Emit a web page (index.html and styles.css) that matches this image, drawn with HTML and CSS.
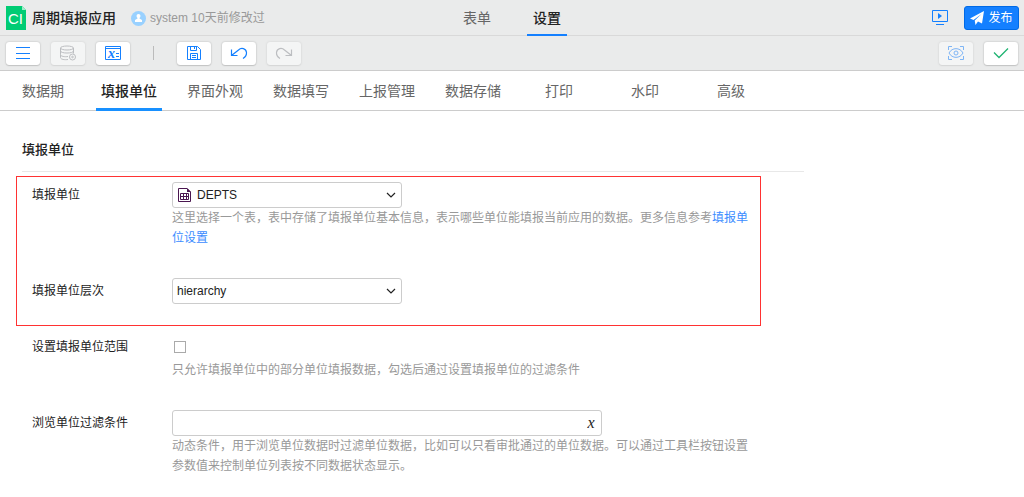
FILE: index.html
```html
<!DOCTYPE html>
<html lang="zh-CN">
<head>
<meta charset="utf-8">
<title>周期填报应用</title>
<link rel="stylesheet" href="styles.css">
</head>
<body>
<header class="header">
  <div class="brand">
    <svg class="logo" width="20" height="24" viewBox="0 0 20 24" aria-hidden="true">
      <path d="M0 0H16L20 4V24H0Z" fill="#00cc74"/>
      <path d="M16 0L20 4H16Z" fill="#a3edcb"/>
      <text x="2" y="18" class="logo-text">CI</text>
    </svg>
    <h1 class="app-name">周期填报应用</h1>
    <svg class="avatar" width="15" height="15" viewBox="0 0 15 15" aria-hidden="true">
      <circle cx="7.500" cy="7.500" r="7.500" fill="#99d1ff"/>
      <circle cx="7.500" cy="5" r="2" fill="#fff"/>
      <path d="M6.500 6H8.500V7.500L11 9V11H4V9L6.500 7.500Z" fill="#fff"/>
    </svg>
    <span class="modified">system 10天前修改过</span>
  </div>
  <nav class="modes">
    <a class="mode" href="#form">表单</a>
    <a class="mode mode-active" href="#settings">设置</a>
  </nav>
  <div class="header-actions">
    <button class="preview" type="button" aria-label="预览">
      <svg width="16" height="16" viewBox="0 0 16 16" fill="none" stroke="#1480ff">
        <path d="M0.500 0.500H15.500V11.500H0.500ZM4 14.500H12"/>
        <path d="M6 3L10 6L6 9Z" fill="#1480ff" stroke="none"/>
      </svg>
    </button>
    <button class="publish" type="button">
      <svg width="14" height="14" viewBox="0 0 14 14" fill="#fff" aria-hidden="true">
        <path d="M14 0L12 12.500L8 10.500L5.500 14L4.700 9.500L11.500 3L3.500 9L0 7.500Z"/>
      </svg>
      <span>发布</span>
    </button>
  </div>
</header>

<div class="toolbar">
  <div class="tools">
    <button class="tool" type="button" aria-label="菜单">
      <svg width="16" height="16" viewBox="0 0 16 16" fill="none" stroke="#1480ff"><path d="M1 2.500H15M1 8.500H15M1 13.500H15"/></svg>
    </button>
    <button class="tool" type="button" aria-label="数据源" disabled>
      <svg width="18" height="16" viewBox="0 0 18 16" fill="none" stroke="#909399">
        <ellipse cx="8" cy="3" rx="6.500" ry="2"/>
        <path d="M1.500 3V6C1.500 8.700 14.500 8.700 14.500 6V3M1.500 6V9.500C1.500 11.500 6 12 9 11.500M14.500 6V8.500M1.500 9.500V12.500C1.500 14.500 6 15 9 14.500"/>
        <circle cx="13.500" cy="12" r="3"/><circle cx="13.500" cy="12" r="0.800"/>
      </svg>
    </button>
    <button class="tool" type="button" aria-label="公式">
      <svg width="16" height="16" viewBox="0 0 16 16" fill="none" stroke="#1480ff">
        <path d="M0.500 1.500H15.500V14.500H0.500ZM0.500 3.500H15.500M11 8.500H14M11 11.500H14"/>
        <text x="3" y="13" class="formula-text">x</text>
      </svg>
    </button>
    <span class="separator"></span>
    <button class="tool" type="button" aria-label="保存">
      <svg width="16" height="16" viewBox="0 0 16 16" fill="none" stroke="#1480ff"><path d="M1.500 1.500H11.500L14.500 4.500V14.500H1.500ZM4.500 1.500V5.500H10.500V1.500M8.500 2V4M4.500 14.500V8.500H11.500V14.500M6 10.500H10M6 12.500H10"/></svg>
    </button>
    <button class="tool" type="button" aria-label="撤销">
      <svg width="18" height="16" viewBox="0 0 18 16" fill="none" stroke="#1480ff" stroke-width="1.200"><path d="M1.500 4.500V10.500H7.500M1.500 10.500L8.500 5C11.500 2 16 3.500 16.500 7.500C16.700 10.500 15.500 12 13 13.500"/></svg>
    </button>
    <button class="tool" type="button" aria-label="重做" disabled>
      <svg width="18" height="16" viewBox="0 0 18 16" fill="none" stroke="#909399" stroke-width="1.200"><path d="M16.500 4.500V10.500H10.500M16.500 10.500L9.500 5C6.500 2 2 3.500 1.500 7.500C1.300 10.500 2.500 12 5 13.500"/></svg>
    </button>
  </div>
  <div class="tools">
    <button class="tool" type="button" aria-label="查看" disabled>
      <svg width="16" height="16" viewBox="0 0 16 16" fill="none" stroke="#1480ff">
        <path d="M0.500 5V1.500H4M12 1.500H15.500V5M15.500 11V14.500H12M4 14.500H0.500V11M1 8C4 2.200 12 2.200 15 8C12 13.800 4 13.800 1 8Z"/>
        <circle cx="8" cy="8" r="2"/>
      </svg>
    </button>
    <button class="tool" type="button" aria-label="确认">
      <svg width="16" height="16" viewBox="0 0 16 16" fill="none" stroke="#20b473" stroke-width="1.300"><path d="M1 7.500L6 12.500L15 3.500"/></svg>
    </button>
  </div>
</div>

<nav class="tabs">
  <a class="tab" href="#period"><span>数据期</span></a>
  <a class="tab tab-active" href="#unit"><span>填报单位</span></a>
  <a class="tab" href="#appearance"><span>界面外观</span></a>
  <a class="tab" href="#entry"><span>数据填写</span></a>
  <a class="tab" href="#submit"><span>上报管理</span></a>
  <a class="tab" href="#storage"><span>数据存储</span></a>
  <a class="tab" href="#print"><span>打印</span></a>
  <a class="tab" href="#watermark"><span>水印</span></a>
  <a class="tab" href="#advanced"><span>高级</span></a>
</nav>

<main class="content">
  <h2 class="section-title">填报单位</h2>
  <form>
    <div class="highlight">
      <div class="row">
        <label class="label" for="unit-table">填报单位</label>
        <div class="field">
          <div class="select-box">
            <select class="control with-icon" id="unit-table"><option>DEPTS</option></select>
            <svg class="table-icon" width="13" height="14" viewBox="0 0 13 14" fill="none" stroke="#4a1650" aria-hidden="true">
              <path d="M0.500 0.500H9L12.500 4V13.500H0.500Z"/>
              <path d="M9 0V4H13Z" fill="#4a1650" stroke="none"/>
              <path d="M2.500 5.500H10.500V11.500H2.500ZM2.500 8.500H10.500M5.500 5.500V11.500M8.500 5.500V11.500"/>
            </svg>
            <svg class="arrow" width="10" height="6" viewBox="0 0 10 6" fill="none" stroke="#222" stroke-width="1.200" aria-hidden="true"><path d="M1 1L5 5L9 1"/></svg>
          </div>
          <p class="help">这里选择一个表，表中存储了填报单位基本信息，表示哪些单位能填报当前应用的数据。更多信息参考<a class="link" href="#unit-help">填报单位设置</a></p>
        </div>
      </div>
      <div class="row">
        <label class="label" for="hierarchy">填报单位层次</label>
        <div class="field">
          <div class="select-box">
            <select class="control" id="hierarchy"><option>hierarchy</option></select>
            <svg class="arrow" width="10" height="6" viewBox="0 0 10 6" fill="none" stroke="#222" stroke-width="1.200" aria-hidden="true"><path d="M1 1L5 5L9 1"/></svg>
          </div>
        </div>
      </div>
    </div>
    <div class="row row-plain">
      <label class="label" for="scope">设置填报单位范围</label>
      <div class="field">
        <div class="check-line"><input class="check" type="checkbox" id="scope"></div>
        <p class="help">只允许填报单位中的部分单位填报数据，勾选后通过设置填报单位的过滤条件</p>
      </div>
    </div>
    <div class="row row-plain">
      <label class="label" for="filter">浏览单位过滤条件</label>
      <div class="field">
        <div class="input-box">
          <input class="control" type="text" id="filter">
          <button class="expression" type="button" aria-label="编辑表达式">x</button>
        </div>
        <p class="help">动态条件，用于浏览单位数据时过滤单位数据，比如可以只看审批通过的单位数据。可以通过工具栏按钮设置参数值来控制单位列表按不同数据状态显示。</p>
      </div>
    </div>
  </form>
</main>
</body>
</html>
```
FILE: styles.css
```css
* {
  box-sizing: border-box;
}

body {
  margin: 0;
  background: #fff;
  color: #222;
  font: 12px/20px "Liberation Sans", "Noto Sans CJK SC", sans-serif;
}

h1, h2, p {
  margin: 0;
}

a {
  color: inherit;
  text-decoration: none;
}

button, input, select {
  margin: 0;
  padding: 0;
  font: inherit;
  color: inherit;
}

svg {
  display: block;
  flex: none;
}

.header {
  display: grid;
  grid-template-columns: 1fr auto 1fr;
  height: 36px;
  background: #eaebeb;
  border-bottom: 1px solid #d9d9d9;
}

.brand {
  display: flex;
  align-items: center;
  padding-left: 6px;
  white-space: nowrap;
}

.logo-text {
  font: 15px "Liberation Sans", sans-serif;
  fill: #fff;
}

.app-name {
  margin-left: 6px;
  font-size: 14px;
  font-weight: 500;
}

.avatar {
  margin-left: 15px;
}

.modified {
  margin-left: 4px;
  color: #999;
}

.modes {
  display: flex;
  font-size: 14px;
}

.mode {
  height: 36px;
  margin: 0 15px;
  padding: 0 6px;
  line-height: 36px;
  color: #666;
}

.mode-active {
  border-bottom: 2px solid #1480ff;
  color: #222;
  font-weight: 500;
}

.header-actions {
  display: flex;
  align-items: center;
  justify-content: flex-end;
  gap: 16px;
  padding-right: 5px;
}

.preview {
  border: 0;
  background: none;
}

.publish {
  display: flex;
  align-items: center;
  justify-content: center;
  gap: 4px;
  width: 55px;
  height: 24px;
  border: 1px solid #006ae6;
  border-radius: 3px;
  background: #1480ff;
  color: #fff;
}

.toolbar {
  display: flex;
  align-items: center;
  justify-content: space-between;
  height: 35px;
  padding: 0 6px;
  background: #eaebeb;
  border-bottom: 1px solid #ccc;
}

.tools {
  display: flex;
  align-items: center;
  gap: 11px;
}

.tool {
  display: flex;
  align-items: center;
  justify-content: center;
  width: 34px;
  height: 23px;
  border: 0;
  border-radius: 3px;
  background: #fff;
  box-shadow: 0 0 2px rgba(0, 0, 0, 0.25), 0 1px 1px rgba(0, 0, 0, 0.1);
}

.tool:disabled {
  opacity: 0.5;
}

.separator {
  width: 1px;
  height: 14px;
  margin: 0 12px;
  background: #bbb;
}

.formula-text {
  font: italic bold 14px "Liberation Serif", serif;
  fill: #1480ff;
  stroke: none;
}

.tabs {
  display: flex;
  height: 40px;
  border-bottom: 1px solid #ccc;
  font-size: 14px;
}

.tab {
  display: flex;
  justify-content: center;
  width: 86px;
  height: 40px;
  line-height: 40px;
  color: #666;
}

.tab span {
  padding: 0 5px;
}

.tab-active {
  color: #222;
  font-weight: 500;
}

.tab-active span {
  border-bottom: 3px solid #1890ff;
}

.content {
  max-width: 804px;
  padding-top: 29px;
}

.section-title {
  margin-left: 22px;
  padding-bottom: 11px;
  border-bottom: 1px solid #e8e8e8;
  font-size: 13px;
  font-weight: 500;
}

.highlight {
  max-width: 745px;
  margin: 4px 0 0 16px;
  padding: 5px 0 21px 15px;
  border: 1px solid #ff3232;
}

.row {
  display: grid;
  grid-template-columns: 140px minmax(0, 580px);
}

.highlight .row + .row {
  margin-top: 30px;
}

.row-plain {
  margin: 8px 0 0 32px;
}

.row-plain + .row-plain {
  margin-top: 30px;
}

.label {
  line-height: 26px;
}

.select-box {
  position: relative;
  max-width: 230px;
}

.input-box {
  position: relative;
  max-width: 430px;
}

.control {
  display: block;
  width: 100%;
  height: 26px;
  padding: 0 5px;
  border: 1px solid #ccc;
  border-radius: 3px;
  background: #fff;
  appearance: none;
}

.select-box .control {
  padding-left: 4px;
}

.select-box .with-icon {
  padding-left: 24px;
}

.table-icon {
  position: absolute;
  top: 6px;
  left: 6px;
  pointer-events: none;
}

.arrow {
  position: absolute;
  top: 10px;
  right: 6px;
  pointer-events: none;
}

.expression {
  position: absolute;
  top: 1px;
  right: 1px;
  width: 20px;
  height: 24px;
  border: 0;
  background: none;
  font: italic 16px "Liberation Serif", serif;
}

.help {
  color: #999;
}

.link {
  color: #3b8cff;
}

.check-line {
  display: flex;
  align-items: center;
  height: 26px;
  padding-left: 2px;
}

.check {
  width: 12px;
  height: 12px;
  border: 1px solid #aaa;
  background: #fff;
  appearance: none;
}

.check:checked {
  background: #1480ff;
}
```
